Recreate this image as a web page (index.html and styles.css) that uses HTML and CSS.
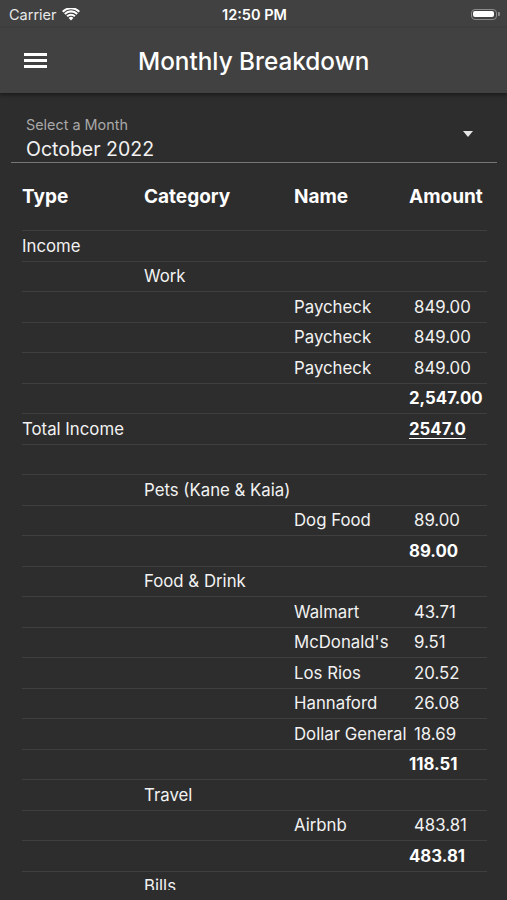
FILE: index.html
```html
<!DOCTYPE html>
<html lang="en">
<head>
    <meta charset="UTF-8">
    <meta name="viewport" content="width=device-width, initial-scale=1.0">
    <title>Monthly Breakdown</title>
    <link rel="stylesheet" href="styles.css">
</head>
<body>
    <div class="status-bar">
        <div class="carrier">
            Carrier
            <svg class="wifi" width="18" height="13" viewBox="0 0 18 13">
                <path d="M9 12.5 L6.6 9.9 A3.4 3.4 0 0 1 11.4 9.9 Z" fill="#fff"/>
                <path d="M4.4 7.6 A6.6 6.6 0 0 1 13.6 7.6 L12.2 9.1 A4.6 4.6 0 0 0 5.8 9.1 Z" fill="#fff"/>
                <path d="M2.1 5.2 A9.8 9.8 0 0 1 15.9 5.2 L14.5 6.7 A7.8 7.8 0 0 0 3.5 6.7 Z" fill="#fff"/>
                <path d="M0 2.9 A13 13 0 0 1 18 2.9 L16.6 4.4 A11 11 0 0 0 1.4 4.4 Z" fill="#fff"/>
            </svg>
        </div>
        <div class="clock">12:50 PM</div>
        <div class="battery">
            <span class="battery-body"><span class="battery-fill"></span></span>
            <span class="battery-tip"></span>
        </div>
    </div>

    <header class="app-bar">
        <button class="menu-button" aria-label="Menu">
            <span></span><span></span><span></span>
        </button>
        <h1 class="title">Monthly Breakdown</h1>
    </header>

    <main class="content">
        <div class="month-select">
            <div class="month-text">
                <label class="month-label">Select a Month</label>
                <div class="month-value">October 2022</div>
            </div>
            <span class="dropdown-arrow"></span>
        </div>

        <div class="breakdown">
            <div class="row head">
                <div>Type</div>
                <div>Category</div>
                <div>Name</div>
                <div>Amount</div>
            </div>
            <div class="row"><div>Income</div><div></div><div></div><div></div></div>
            <div class="row"><div></div><div>Work</div><div></div><div></div></div>
            <div class="row"><div></div><div></div><div>Paycheck</div><div class="amt">849.00</div></div>
            <div class="row"><div></div><div></div><div>Paycheck</div><div class="amt">849.00</div></div>
            <div class="row"><div></div><div></div><div>Paycheck</div><div class="amt">849.00</div></div>
            <div class="row"><div></div><div></div><div></div><div class="sum">2,547.00</div></div>
            <div class="row"><div>Total Income</div><div></div><div></div><div class="sum total">2547.0</div></div>
            <div class="row"><div></div><div></div><div></div><div></div></div>
            <div class="row"><div></div><div>Pets (Kane &amp; Kaia)</div><div></div><div></div></div>
            <div class="row"><div></div><div></div><div>Dog Food</div><div class="amt">89.00</div></div>
            <div class="row"><div></div><div></div><div></div><div class="sum">89.00</div></div>
            <div class="row"><div></div><div>Food &amp; Drink</div><div></div><div></div></div>
            <div class="row"><div></div><div></div><div>Walmart</div><div class="amt">43.71</div></div>
            <div class="row"><div></div><div></div><div>McDonald's</div><div class="amt">9.51</div></div>
            <div class="row"><div></div><div></div><div>Los Rios</div><div class="amt">20.52</div></div>
            <div class="row"><div></div><div></div><div>Hannaford</div><div class="amt">26.08</div></div>
            <div class="row"><div></div><div></div><div>Dollar General</div><div class="amt">18.69</div></div>
            <div class="row"><div></div><div></div><div></div><div class="sum">118.51</div></div>
            <div class="row"><div></div><div>Travel</div><div></div><div></div></div>
            <div class="row"><div></div><div></div><div>Airbnb</div><div class="amt">483.81</div></div>
            <div class="row"><div></div><div></div><div></div><div class="sum">483.81</div></div>
            <div class="row"><div></div><div>Bills</div><div></div><div></div></div>
        </div>
    </main>
</body>
</html>
```

FILE: styles.css
```css
body {
    margin: 0;
    height: 900px;
    overflow: hidden;
    background-color: #2d2d2d;
    color: #f2f2f2;
    font-family: 'Inter', 'Roboto', sans-serif;
}

/* status bar */
.status-bar {
    display: flex;
    align-items: center;
    justify-content: space-between;
    height: 28px;
    padding: 0 7px 0 9px;
    background-color: #414141;
    font-size: 14.5px;
    color: #fff;
}

.carrier {
    display: flex;
    align-items: center;
    gap: 5px;
    width: 90px;
    color: #e8e8e8;
}

.clock {
    font-weight: 600;
}

.battery {
    display: flex;
    align-items: center;
    justify-content: flex-end;
    width: 90px;
}

.battery-body {
    display: flex;
    width: 26px;
    height: 11px;
    padding: 1.5px;
    border: 1px solid #8a8a8a;
    border-radius: 4px;
    box-sizing: border-box;
}

.battery-fill {
    flex: 1;
    background-color: #fff;
    border-radius: 2px;
}

.battery-tip {
    width: 2px;
    height: 4px;
    margin-left: 1px;
    background-color: #8a8a8a;
    border-radius: 0 1px 1px 0;
}

/* app bar */
.app-bar {
    display: flex;
    align-items: center;
    height: 65px;
    padding: 0 24px;
    background-color: #414141;
    box-shadow: 0 2px 4px rgba(0, 0, 0, 0.45);
    position: relative;
}

.menu-button {
    display: flex;
    flex-direction: column;
    gap: 3.6px;
    width: 23px;
    padding: 0;
    background: none;
    border: none;
}

.menu-button span {
    height: 2.5px;
    background-color: #fff;
}

.title {
    margin: 0 0 0 91px;
    font-size: 24.3px;
    font-weight: 500;
    color: #fff;
}

/* month select */
.content {
    height: 797px;
    overflow: hidden;
    padding: 0 10px 0 11px;
}

.month-select {
    display: flex;
    align-items: center;
    justify-content: space-between;
    margin-top: 23px;
    padding: 0 24px 0 15px;
    border-bottom: 1.5px solid #777;
}

.month-label {
    display: block;
    font-size: 14.4px;
    color: #a8a8a8;
    line-height: 18px;
}

.month-value {
    margin-top: 3px;
    padding-bottom: 1px;
    font-size: 19.5px;
    line-height: 24px;
}

.dropdown-arrow {
    width: 0;
    height: 0;
    margin-bottom: 10px;
    border-left: 5.5px solid transparent;
    border-right: 5.5px solid transparent;
    border-top: 6px solid #e6e6e6;
}

/* table */
.breakdown {
    margin: 0 10px 0 11px;
}

.row {
    display: grid;
    grid-template-columns: 122px 150px 115px 1fr;
    align-items: center;
    height: 30.5px;
    border-bottom: 1px solid #3f3f3f;
    box-sizing: border-box;
    font-size: 16.8px;
    white-space: nowrap;
}

.row.head {
    height: 68px;
    font-size: 19px;
    font-weight: 700;
    color: #fff;
}

.amt {
    padding-left: 5px;
}

.sum {
    font-weight: 700;
    color: #fff;
}

.total {
    text-decoration: underline;
    text-underline-offset: 3px;
}
```
